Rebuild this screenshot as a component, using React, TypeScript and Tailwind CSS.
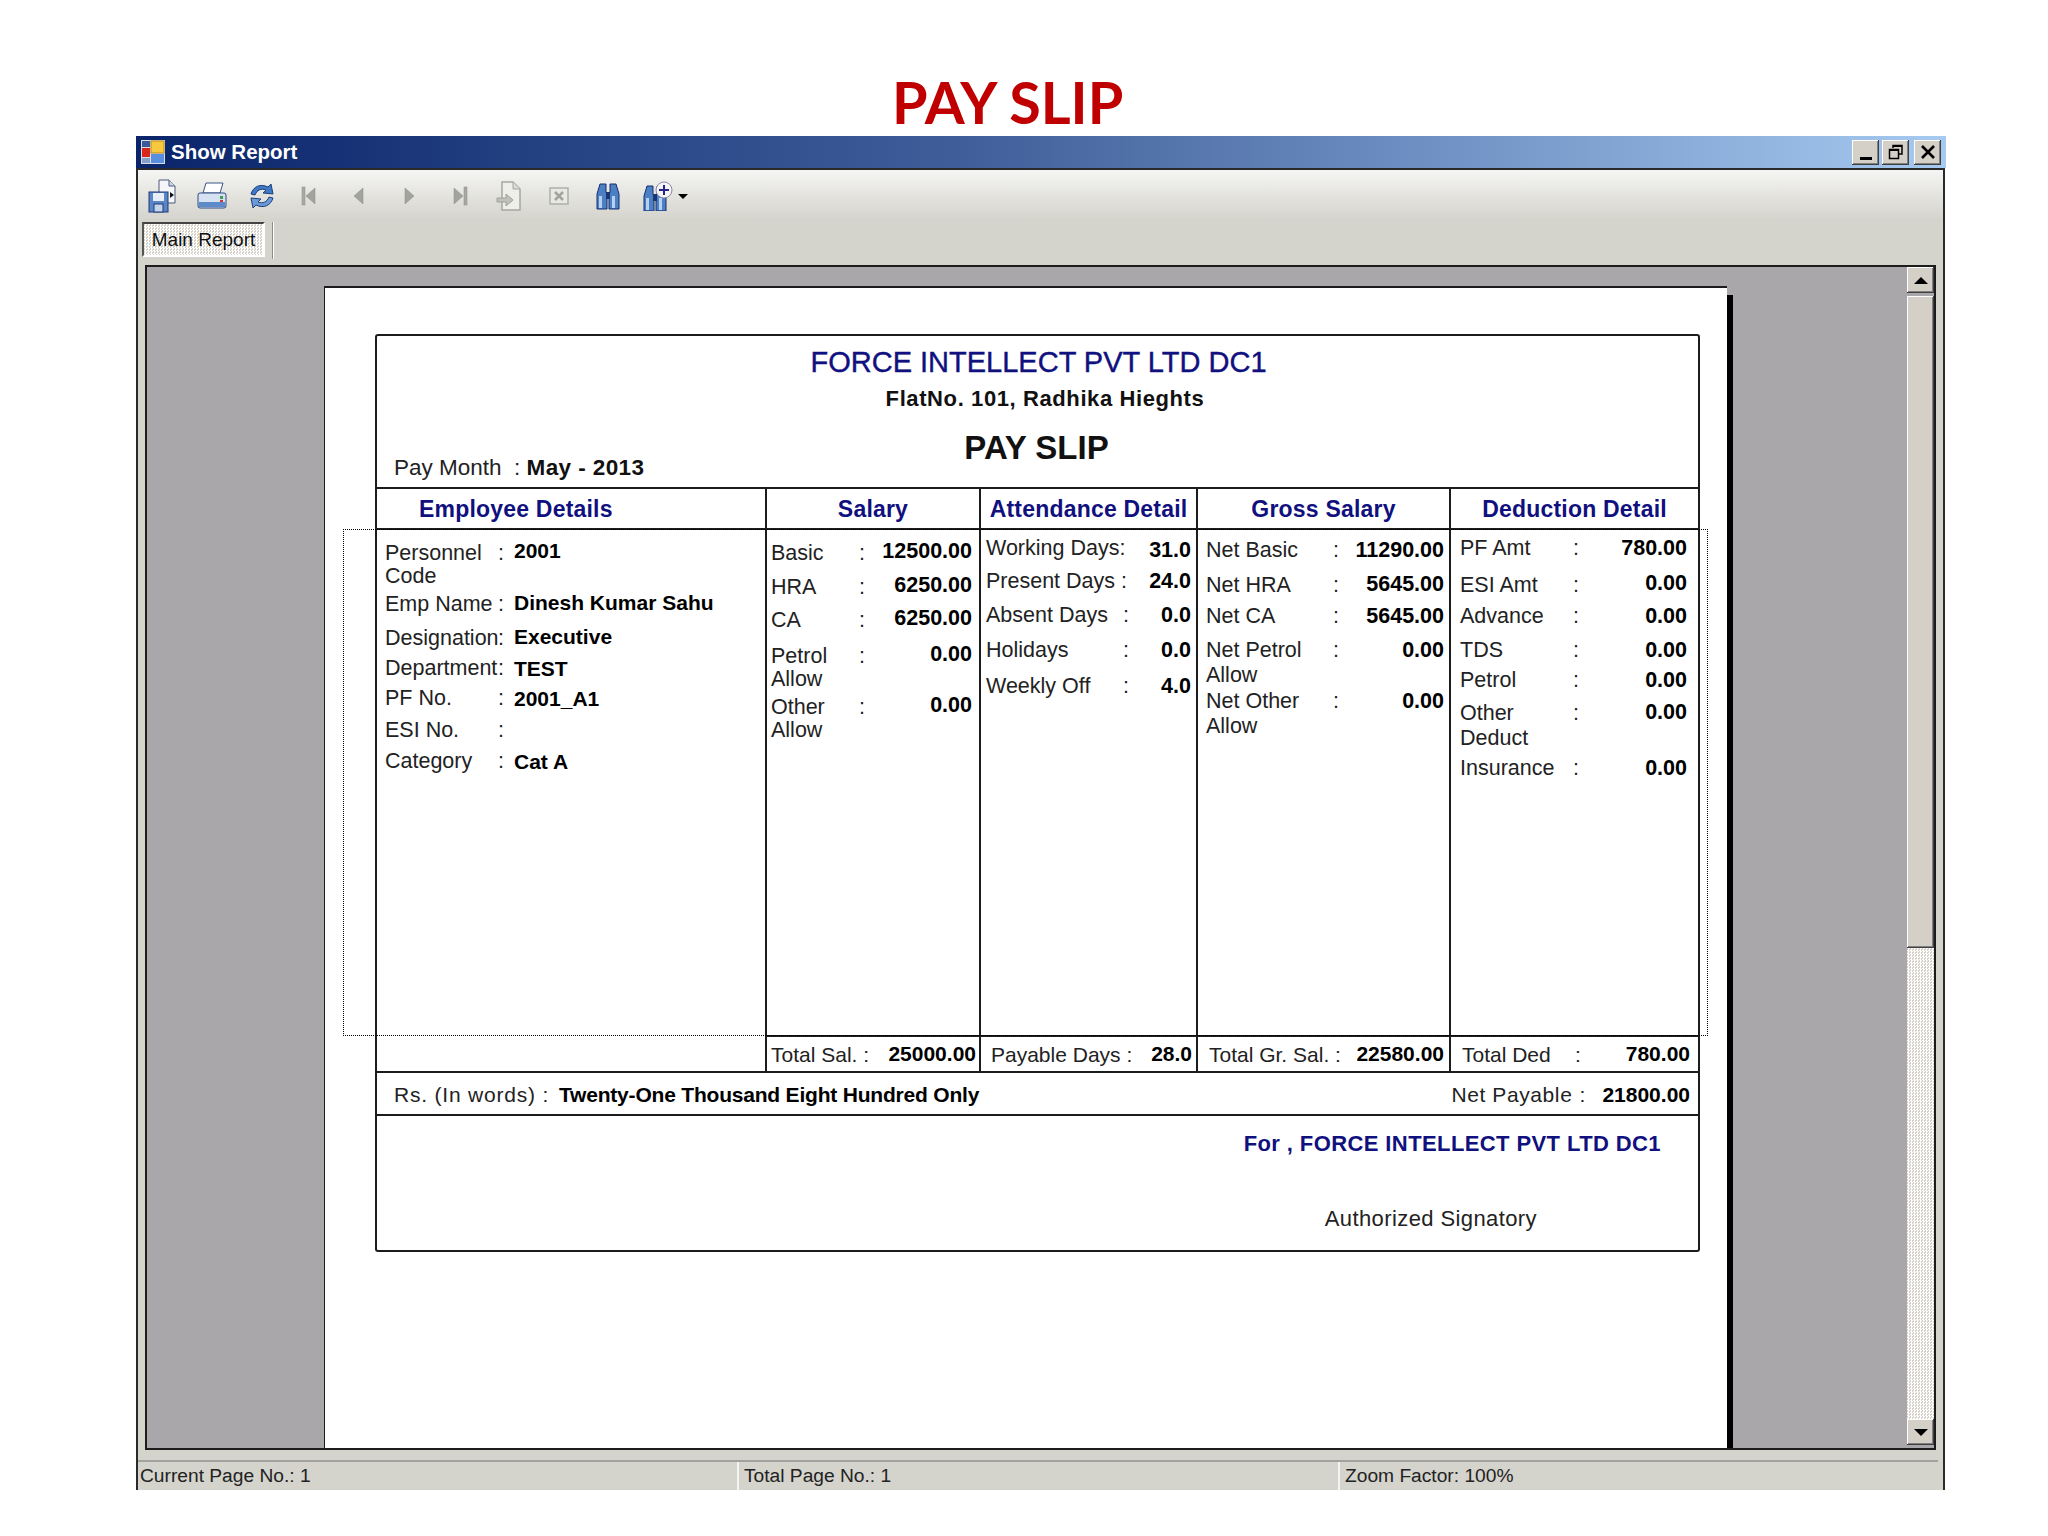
import React from 'react'

// ─── data ─────────────────────────────────────────────────────────────────────

type Row = { label: string; value?: string; h: string; vc?: string }

type Col = {
  wrap: string
  grid: string
  leading: string
  valueAlign: string
  rows: Row[]
}

const TABLE_COLS = 'grid grid-cols-[390px_214px_217px_253px_1fr]'

const columns: Col[] = [
  {
    wrap: 'pl-[8px] pt-[12px]',
    grid: 'grid-cols-[113px_16px_1fr]',
    leading: 'leading-[23px]',
    valueAlign: 'text-left text-[21px]',
    rows: [
      { label: 'Personnel Code', value: '2001', h: 'h-[51px]', vc: '-mt-[3px]' },
      { label: 'Emp Name', value: 'Dinesh Kumar Sahu', h: 'h-[34px]', vc: '-mt-[2px]' },
      { label: 'Designation', value: 'Executive', h: 'h-[30px]', vc: '-mt-[2px]' },
      { label: 'Department', value: 'TEST', h: 'h-[30px]' },
      { label: 'PF No.', value: '2001_A1', h: 'h-[32px]' },
      { label: 'ESI No.', h: 'h-[31px]' },
      { label: 'Category', value: 'Cat A', h: 'h-[31px]' },
    ],
  },
  {
    wrap: 'pl-[4px] pr-[7px] pt-[12px]',
    grid: 'grid-cols-[88px_16px_1fr]',
    leading: 'leading-[23px]',
    valueAlign: 'text-right',
    rows: [
      { label: 'Basic', value: '12500.00', h: 'h-[34px]', vc: '-mt-[2px]' },
      { label: 'HRA', value: '6250.00', h: 'h-[33px]', vc: '-mt-[2px]' },
      { label: 'CA', value: '6250.00', h: 'h-[36px]', vc: '-mt-[2px]' },
      { label: 'Petrol Allow', value: '0.00', h: 'h-[51px]', vc: '-mt-[2px]' },
      { label: 'Other Allow', value: '0.00', h: 'h-[46px]', vc: '-mt-[2px]' },
    ],
  },
  {
    wrap: 'pl-[5px] pr-[5px] pt-[7px]',
    grid: 'grid-cols-[137px_16px_1fr]',
    leading: 'leading-[23px]',
    valueAlign: 'text-right',
    rows: [
      { label: 'Working Days:', value: '31.0', h: 'h-[33px]', vc: 'mt-[2px]' },
      { label: 'Present Days :', value: '24.0', h: 'h-[34px]' },
      { label: 'Absent Days', value: '0.0', h: 'h-[35px]' },
      { label: 'Holidays', value: '0.0', h: 'h-[36px]' },
      { label: 'Weekly Off', value: '4.0', h: 'h-[36px]' },
    ],
  },
  {
    wrap: 'pl-[8px] pr-[5px] pt-[8px]',
    grid: 'grid-cols-[127px_16px_1fr]',
    leading: 'leading-[25px]',
    valueAlign: 'text-right',
    rows: [
      { label: 'Net Basic', value: '11290.00', h: 'h-[35px]' },
      { label: 'Net HRA', value: '5645.00', h: 'h-[31px]', vc: '-mt-[1px]' },
      { label: 'Net CA', value: '5645.00', h: 'h-[34px]' },
      { label: 'Net Petrol Allow', value: '0.00', h: 'h-[51px]' },
      { label: 'Net Other Allow', value: '0.00', h: 'h-[50px]' },
    ],
  },
  {
    wrap: 'pl-[9px] pr-[11px] pt-[6px]',
    grid: 'grid-cols-[113px_16px_1fr]',
    leading: 'leading-[25px]',
    valueAlign: 'text-right',
    rows: [
      { label: 'PF Amt', value: '780.00', h: 'h-[37px]' },
      { label: 'ESI Amt', value: '0.00', h: 'h-[31px]', vc: '-mt-[2px]' },
      { label: 'Advance', value: '0.00', h: 'h-[34px]' },
      { label: 'TDS', value: '0.00', h: 'h-[30px]' },
      { label: 'Petrol', value: '0.00', h: 'h-[33px]' },
      { label: 'Other Deduct', value: '0.00', h: 'h-[55px]', vc: '-mt-[1px]' },
      { label: 'Insurance', value: '0.00', h: 'h-[30px]' },
    ],
  },
]

const NO_COLON = ['Working Days:', 'Present Days :']

const HEADER_CELL = 'pt-[2px] text-[23px] font-bold text-[#10107e] tracking-[0.2px] leading-[37px]'
const CELL_LINE = 'border-r-2 border-[#1c1c1c] last:border-r-0'

// ─── icons ────────────────────────────────────────────────────────────────────

function WindowIcon() {
  return (
    <svg width="24" height="24" viewBox="0 0 24 24" className="shrink-0">
      <rect x="0" y="0" width="24" height="24" fill="#d9dde4" />
      <rect x="1" y="1" width="8" height="6" fill="#3a5a9c" />
      <rect x="10" y="1" width="13" height="12" fill="#f8c93e" stroke="#b88a1a" />
      <rect x="1" y="8" width="8" height="9" fill="#d8261c" />
      <rect x="10" y="14" width="13" height="9" fill="#5a8fe0" />
      <rect x="1" y="18" width="8" height="5" fill="#8aa0c8" />
    </svg>
  )
}

function SaveIcon() {
  return (
    <svg width="30" height="34" viewBox="0 0 30 34">
      <path d="M11 1h10l6 6v17H11z" fill="#f4f6fa" stroke="#4a5a78" />
      <path d="M21 1v6h6" fill="#cfd8ea" stroke="#4a5a78" />
      <path d="M22 13l4 3-4 3z" fill="#101010" />
      <rect x="1" y="13" width="19" height="20" fill="#5a86c8" stroke="#1d3a78" />
      <rect x="5" y="14" width="11" height="8" fill="#e8eef8" />
      <rect x="6" y="25" width="9" height="8" fill="#c6d4ea" stroke="#1d3a78" />
    </svg>
  )
}

function PrintIcon() {
  return (
    <svg width="30" height="28" viewBox="0 0 30 28">
      <path d="M9 1h17l-3 10H6z" fill="#ffffff" stroke="#3c5688" />
      <path d="M3 11h24a2 2 0 0 1 2 2v11a2 2 0 0 1-2 2H3a2 2 0 0 1-2-2V13a2 2 0 0 1 2-2z" fill="#d6e2f2" stroke="#2e4a80" />
      <rect x="2" y="20" width="26" height="5" fill="#5d8ac8" />
      <rect x="23" y="14" width="3" height="3" fill="#3aa04a" />
      <rect x="23" y="18" width="3" height="2" fill="#d0342c" />
    </svg>
  )
}

function RefreshIcon() {
  return (
    <svg width="30" height="30" viewBox="0 0 30 30">
      <path d="M4 13C6 6 13 2 21 6l3-3 2 10-10-1 3-3C14 7 10 9 8 14z" fill="#3f78c4" stroke="#1c3f7c" strokeWidth="1" />
      <path d="M26 17c-2 7-9 11-17 7l-3 3-2-10 10 1-3 3c5 2 9 0 11-5z" fill="#6a9ad8" stroke="#1c3f7c" strokeWidth="1" />
    </svg>
  )
}

function NavIcon({ d, bar }: { d: string; bar?: number }) {
  return (
    <svg width="20" height="22" viewBox="0 0 20 22">
      {bar !== undefined && <rect x={bar} y="2" width="3" height="18" fill="#a9a9a4" stroke="#8c8c88" strokeWidth="0.5" />}
      <path d={d} fill="#a3a39e" stroke="#8c8c88" strokeWidth="0.5" />
    </svg>
  )
}

function ExportIcon() {
  return (
    <svg width="26" height="30" viewBox="0 0 26 30">
      <path d="M6 1h11l7 7v21H6z" fill="#eeeeea" stroke="#a6a6a2" strokeWidth="1.5" />
      <path d="M17 1v7h7" fill="#d8d8d4" stroke="#a6a6a2" />
      <path d="M1 17h9v-4l7 6-7 6v-4H1z" fill="#c0c0bb" stroke="#a0a09c" />
    </svg>
  )
}

function StopIcon() {
  return (
    <svg width="20" height="20" viewBox="0 0 20 20">
      <rect x="1" y="2" width="18" height="16" fill="#e8e8e4" stroke="#aeaeaa" strokeWidth="1.5" />
      <path d="M6 6l8 8M14 6l-8 8" stroke="#a3a39e" strokeWidth="2.5" />
    </svg>
  )
}

function Binoculars() {
  return (
    <>
      <path d="M4 2h6v8l1 3v14H1V12z" fill="#4d7fc4" stroke="#14306e" />
      <path d="M14 2h6l3 10v15H13V13l1-3z" fill="#4d7fc4" stroke="#14306e" />
      <rect x="10" y="10" width="4" height="7" fill="#1a3672" />
      <rect x="3" y="14" width="3" height="12" fill="#b8d0f0" />
      <rect x="16" y="14" width="3" height="12" fill="#b8d0f0" />
    </>
  )
}

function FindIcon() {
  return (
    <svg width="24" height="28" viewBox="0 0 24 28">
      <Binoculars />
    </svg>
  )
}

function ZoomIcon() {
  return (
    <svg width="30" height="30" viewBox="0 0 30 30">
      <g transform="translate(0 3)">
        <Binoculars />
      </g>
      <circle cx="21" cy="9" r="8" fill="#f4f4f4" stroke="#8a8aa8" />
      <path d="M21 4v10M16 9h10" stroke="#24248c" strokeWidth="2" />
    </svg>
  )
}

const tools = [
  <SaveIcon />,
  <PrintIcon />,
  <RefreshIcon />,
  <NavIcon bar={1} d="M5 11l9-8v16z" />,
  <NavIcon d="M3 11l9-8v16z" />,
  <NavIcon d="M14 11L5 3v16z" />,
  <NavIcon bar={14} d="M13 11L4 3v16z" />,
  <ExportIcon />,
  <StopIcon />,
  <FindIcon />,
  <ZoomIcon />,
]

// ─── window chrome ────────────────────────────────────────────────────────────

const RAISED = 'bg-[#d4d0c8] shadow-[inset_-1px_-1px_0_#404040,inset_1px_1px_0_#ffffff,inset_-2px_-2px_0_#808080]'
const DITHER = 'bg-[repeating-conic-gradient(#ffffff_0_25%,#d4d0c8_0_50%)] bg-[length:3px_3px]'

function CaptionButton({ children, className }: { children: React.ReactNode; className: string }) {
  return <div className={`flex h-[25px] w-[27px] items-center justify-center ${RAISED} ${className}`}>{children}</div>
}

function TitleBar() {
  return (
    <div className="flex h-[32px] items-center bg-gradient-to-r from-[#0a246a] via-[#3f5d99] via-45% to-[#a6caf0] pl-[5px] pr-[5px]">
      <WindowIcon />
      <span className="ml-[6px] text-[20.5px] font-bold text-white">Show Report</span>
      <div className="ml-auto flex">
        <CaptionButton className="mr-[3px]">
          <div className="mt-[12px] h-[3px] w-[12px] bg-black" />
        </CaptionButton>
        <CaptionButton className="mr-[5px]">
          <svg width="16" height="16" viewBox="0 0 16 16" fill="none" stroke="#000">
            <path d="M5 4V1.5h9V10h-3" strokeWidth="1.5" />
            <path d="M5 2h9" strokeWidth="2" />
            <rect x="1.5" y="5.5" width="9" height="9" strokeWidth="1.5" />
            <path d="M1.5 6h9" strokeWidth="2" />
          </svg>
        </CaptionButton>
        <CaptionButton className="">
          <svg width="16" height="14" viewBox="0 0 16 14" stroke="#000" strokeWidth="2.6">
            <path d="M2 1l12 12M14 1L2 13" />
          </svg>
        </CaptionButton>
      </div>
    </div>
  )
}

function Toolbar() {
  return (
    <div className="flex h-[50px] items-center bg-gradient-to-b from-[#f5f5f3] to-[#d4d3cc] pt-[2px]">
      {tools.map((icon, i) => (
        <div key={i} className="flex w-[49.5px] shrink-0 items-center justify-center">
          {icon}
        </div>
      ))}
      <div className="-ml-[5px] mt-[1px] h-0 w-0 border-x-[5px] border-t-[5px] border-x-transparent border-t-black" />
    </div>
  )
}

function TabRow() {
  return (
    <div className="flex h-[45px] items-start bg-[#d4d3cc] pl-[4px] pt-[2px]">
      <div className={`flex h-[35px] w-[123px] items-center justify-center border-2 border-b-white border-l-[#555] border-r-white border-t-[#444] pt-[2px] text-[19px] text-[#111] ${DITHER}`}>
        Main Report
      </div>
      <div className="ml-[7px] h-[37px] w-[2px] border-l border-[#8e8d88] bg-white" />
    </div>
  )
}

function Scrollbar() {
  return (
    <div className="flex w-[27px] shrink-0 flex-col">
      <div className={`flex h-[26px] items-center justify-center ${RAISED}`}>
        <div className="h-0 w-0 border-x-[7px] border-b-[7px] border-x-transparent border-b-black" />
      </div>
      <div className={`mt-[3px] h-[652px] ${RAISED}`} />
      <div className={`flex-1 ${DITHER}`} />
      <div className={`mb-[3px] flex h-[26px] items-center justify-center ${RAISED}`}>
        <div className="h-0 w-0 border-x-[7px] border-t-[7px] border-x-transparent border-t-black" />
      </div>
    </div>
  )
}

function StatusBar() {
  return (
    <div className="mr-[5px] flex h-[30px] items-center border-t-2 border-[#a3a29c] bg-[#d4d3cc] text-[19.2px] text-[#222]">
      <div className="w-[601px] border-r-2 border-[#f4f4f0] pl-[2px] leading-[28px]">Current Page No.: 1</div>
      <div className="w-[601px] border-r-2 border-[#f4f4f0] pl-[5px] leading-[28px]">Total Page No.: 1</div>
      <div className="flex-1 pl-[5px] leading-[28px]">Zoom Factor: 100%</div>
    </div>
  )
}

// ─── report ───────────────────────────────────────────────────────────────────

function DetailColumn({ col }: { col: Col }) {
  return (
    <div className={`${CELL_LINE} ${col.wrap}`}>
      {col.rows.map((row) => (
        <div key={row.label} className={`grid content-start items-start ${col.grid} ${col.leading} ${row.h}`}>
          <span className={NO_COLON.includes(row.label) ? 'col-span-2' : ''}>{row.label}</span>
          {!NO_COLON.includes(row.label) && <span>:</span>}
          <span className={`font-bold text-black ${col.valueAlign} ${row.vc ?? ''}`}>{row.value}</span>
        </div>
      ))}
    </div>
  )
}

function Report() {
  return (
    <div className="relative ml-[50px] mt-[46px] h-[918px] w-[1325px] rounded-[3px] border-2 border-[#1c1c1c]">
      {/* Heading */}
      <div className="h-[151px] text-center">
        <div className="pl-[2px] pt-[9px] text-[29px] leading-[34px] text-[#10107e] [-webkit-text-stroke:0.4px_#10107e]">
          FORCE INTELLECT PVT LTD DC1
        </div>
        <div className="mt-[7px] pl-[15px] text-[22px] font-bold leading-[26px] tracking-[0.6px] text-[#111]">
          FlatNo. 101, Radhika Hieghts
        </div>
        <div className="mt-[18px] pr-[2px] text-[33px] font-bold leading-[36px] text-[#111]">PAY SLIP</div>
        <div className="-mt-[11px] pl-[17px] text-left text-[22.5px] leading-[26px] text-[#222]">
          Pay Month&nbsp; : <span className="font-bold tracking-[0.4px] text-[#111]">May - 2013</span>
        </div>
      </div>

      {/* Column titles */}
      <div className={`${TABLE_COLS} border-y-2 border-[#1c1c1c] text-center`}>
        <div className={`${CELL_LINE} ${HEADER_CELL} pl-[42px] text-left`}>Employee Details</div>
        <div className={`${CELL_LINE} ${HEADER_CELL}`}>Salary</div>
        <div className={`${CELL_LINE} ${HEADER_CELL}`}>Attendance Detail</div>
        <div className={`${CELL_LINE} ${HEADER_CELL}`}>Gross Salary</div>
        <div className={`${CELL_LINE} ${HEADER_CELL}`}>Deduction Detail</div>
      </div>

      {/* Details */}
      <div className={`${TABLE_COLS} h-[505px] text-[21.5px] text-[#222]`}>
        {columns.map((col, i) => (
          <DetailColumn key={i} col={col} />
        ))}
      </div>

      {/* Totals */}
      <div className={`${TABLE_COLS} h-[38px] border-b-2 border-[#1c1c1c] text-[21px] leading-[35px] text-[#222]`}>
        <div className={CELL_LINE} />
        <div className={`${CELL_LINE} flex justify-between border-t-2 pl-[4px] pr-[3px]`}>
          <span>Total Sal. :</span>
          <span className="-mt-[1px] font-bold text-black">25000.00</span>
        </div>
        <div className={`${CELL_LINE} flex justify-between border-t-2 pl-[10px] pr-[4px]`}>
          <span>Payable Days :</span>
          <span className="-mt-[1px] font-bold text-black">28.0</span>
        </div>
        <div className={`${CELL_LINE} flex justify-between border-t-2 pl-[11px] pr-[5px]`}>
          <span>Total Gr. Sal. :</span>
          <span className="-mt-[1px] font-bold text-black">22580.00</span>
        </div>
        <div className="flex justify-between border-t-2 border-[#1c1c1c] pl-[11px] pr-[8px]">
          <span className="w-[113px]">Total Ded</span>
          <span>:</span>
          <span className="-mt-[1px] flex-1 text-right font-bold text-black">780.00</span>
        </div>
      </div>

      {/* Amount in words */}
      <div className="flex h-[43px] items-center border-b-2 border-[#1c1c1c] pl-[17px] pr-[8px] pt-[2px] text-[21px] text-[#222]">
        <span className="w-[165px] tracking-[0.8px]">Rs. (In words) :</span>
        <span className="font-bold tracking-[-0.2px] text-black">Twenty-One Thousand Eight Hundred Only</span>
        <span className="ml-auto w-[128px] tracking-[0.6px]">Net Payable</span>
        <span className="w-[23px]">:</span>
        <span className="font-bold text-black">21800.00</span>
      </div>

      {/* Signature */}
      <div className="pr-[37px] pt-[15px] text-right text-[22px] font-bold leading-[26px] tracking-[0.4px] text-[#10107e]">
        For , FORCE INTELLECT PVT LTD DC1
      </div>
      <div className="mt-[49px] pr-[161px] text-right text-[22px] leading-[26px] tracking-[0.4px] text-[#222]">Authorized Signatory</div>
    </div>
  )
}

export default function App() {
  return (
    <div className="h-[1536px] w-[2048px] overflow-hidden bg-white font-['Liberation_Sans',sans-serif]">
      <div className="h-[136px] pl-[892px] pt-[67px] font-['Lato',sans-serif] text-[57.5px] font-bold leading-[70px] text-[#c00000]">
        PAY SLIP
      </div>

      <div className="ml-[136px] w-[1810px]">
        <TitleBar />

        <div className="mr-[1px] border-x-2 border-t-2 border-[#2a2a2a] bg-[#d4d3cc]">
          <Toolbar />
          <TabRow />

          {/* Report viewer */}
          <div className="mx-[7px] flex h-[1185px] overflow-hidden border-2 border-[#1c1c1c] bg-[#a9a7aa]">
            <div className="relative flex-1 overflow-hidden pl-[177px] pt-[19px]">
              <div className="h-[1200px] w-[1403px] border-l border-t-2 border-[#1c1c1c] bg-white pt-0 shadow-[6px_9px_0_0_#000000]">
                <Report />
                {/* Dotted selection frame */}
                <div className="absolute left-[196px] top-[262px] h-[507px] w-[1365px] border border-dotted border-black" />
              </div>
            </div>
            <Scrollbar />
          </div>

          <div className="h-[10px]" />
          <StatusBar />
        </div>
      </div>
    </div>
  )
}
